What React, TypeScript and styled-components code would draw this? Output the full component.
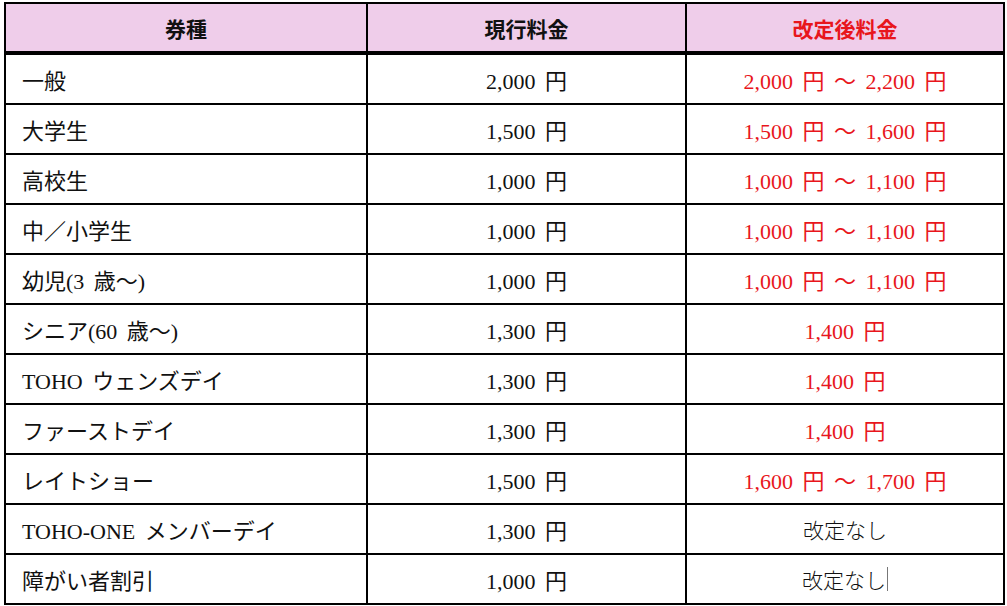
import * as React from "react"
import styled, { createGlobalStyle } from "styled-components"

const GlobalStyle = createGlobalStyle`
  html, body {
    margin: 0;
    padding: 0;
    background: #fff;
  }
`

const Page = styled.div`
  padding: 2px 0 0 4px;
`

const Grid = styled.div`
  display: grid;
  grid-template-columns: 362px 319px 1fr;
  width: 1001px;
  box-sizing: border-box;
  border: 2px solid #000;
  font-family: "Liberation Serif", "Noto Sans CJK JP", serif;
  font-size: 22px;
  color: #111;
`

const HeadCell = styled.div<{ red?: boolean; last?: boolean }>`
  box-sizing: border-box;
  height: 51px;
  background: #efcdea;
  border-bottom: 4px solid #000;
  border-right: ${(p) => (p.last ? "none" : "2px solid #000")};
  display: flex;
  align-items: center;
  justify-content: center;
  font-family: "Noto Sans CJK JP", "Noto Sans", sans-serif;
  font-weight: 700;
  font-size: 21px;
  color: ${(p) => (p.red ? "#e8161c" : "#111")};
`

const Cell = styled.div<{ align?: "left" | "center"; red?: boolean; last?: boolean; bottom?: boolean }>`
  box-sizing: border-box;
  height: ${(p) => (p.bottom ? "48px" : "50px")};
  border-bottom: ${(p) => (p.bottom ? "none" : "2px solid #000")};
  border-right: ${(p) => (p.last ? "none" : "2px solid #000")};
  display: flex;
  align-items: center;
  justify-content: ${(p) => (p.align === "left" ? "flex-start" : "center")};
  padding-left: ${(p) => (p.align === "left" ? "16px" : "0")};
  color: ${(p) => (p.red ? "#e8161c" : "#111")};
  white-space: pre;
  word-spacing: 4px;
`

const Plain = styled.span`
  font-family: "Noto Sans CJK JP", sans-serif;
  font-weight: 300;
  font-size: 21px;
`

const Caret = styled.span`
  display: inline-block;
  width: 1px;
  height: 24px;
  margin-left: 1px;
  background: #777;
`

type Row = { name: string; now: string; next: string; red: boolean }

const rows: Row[] = [
  { name: "一般", now: "2,000 円", next: "2,000 円 ～ 2,200 円", red: true },
  { name: "大学生", now: "1,500 円", next: "1,500 円 ～ 1,600 円", red: true },
  { name: "高校生", now: "1,000 円", next: "1,000 円 ～ 1,100 円", red: true },
  { name: "中／小学生", now: "1,000 円", next: "1,000 円 ～ 1,100 円", red: true },
  { name: "幼児(3 歳～)", now: "1,000 円", next: "1,000 円 ～ 1,100 円", red: true },
  { name: "シニア(60 歳～)", now: "1,300 円", next: "1,400 円", red: true },
  { name: "TOHO ウェンズデイ", now: "1,300 円", next: "1,400 円", red: true },
  { name: "ファーストデイ", now: "1,300 円", next: "1,400 円", red: true },
  { name: "レイトショー", now: "1,500 円", next: "1,600 円 ～ 1,700 円", red: true },
  { name: "TOHO-ONE メンバーデイ", now: "1,300 円", next: "改定なし", red: false },
  { name: "障がい者割引", now: "1,000 円", next: "改定なし", red: false },
]

export default function App() {
  return (
    <Page>
      <GlobalStyle />
      <Grid>
        <HeadCell>券種</HeadCell>
        <HeadCell>現行料金</HeadCell>
        <HeadCell red last>
          改定後料金
        </HeadCell>
        {rows.map((r, i) => {
          const bottom = i === rows.length - 1
          return (
            <React.Fragment key={r.name}>
              <Cell align="left" bottom={bottom}>
                {r.name}
              </Cell>
              <Cell bottom={bottom}>{r.now}</Cell>
              <Cell red={r.red} last bottom={bottom}>
                {r.red ? r.next : <Plain>{r.next}</Plain>}
                {bottom && <Caret />}
              </Cell>
            </React.Fragment>
          )
        })}
      </Grid>
    </Page>
  )
}
